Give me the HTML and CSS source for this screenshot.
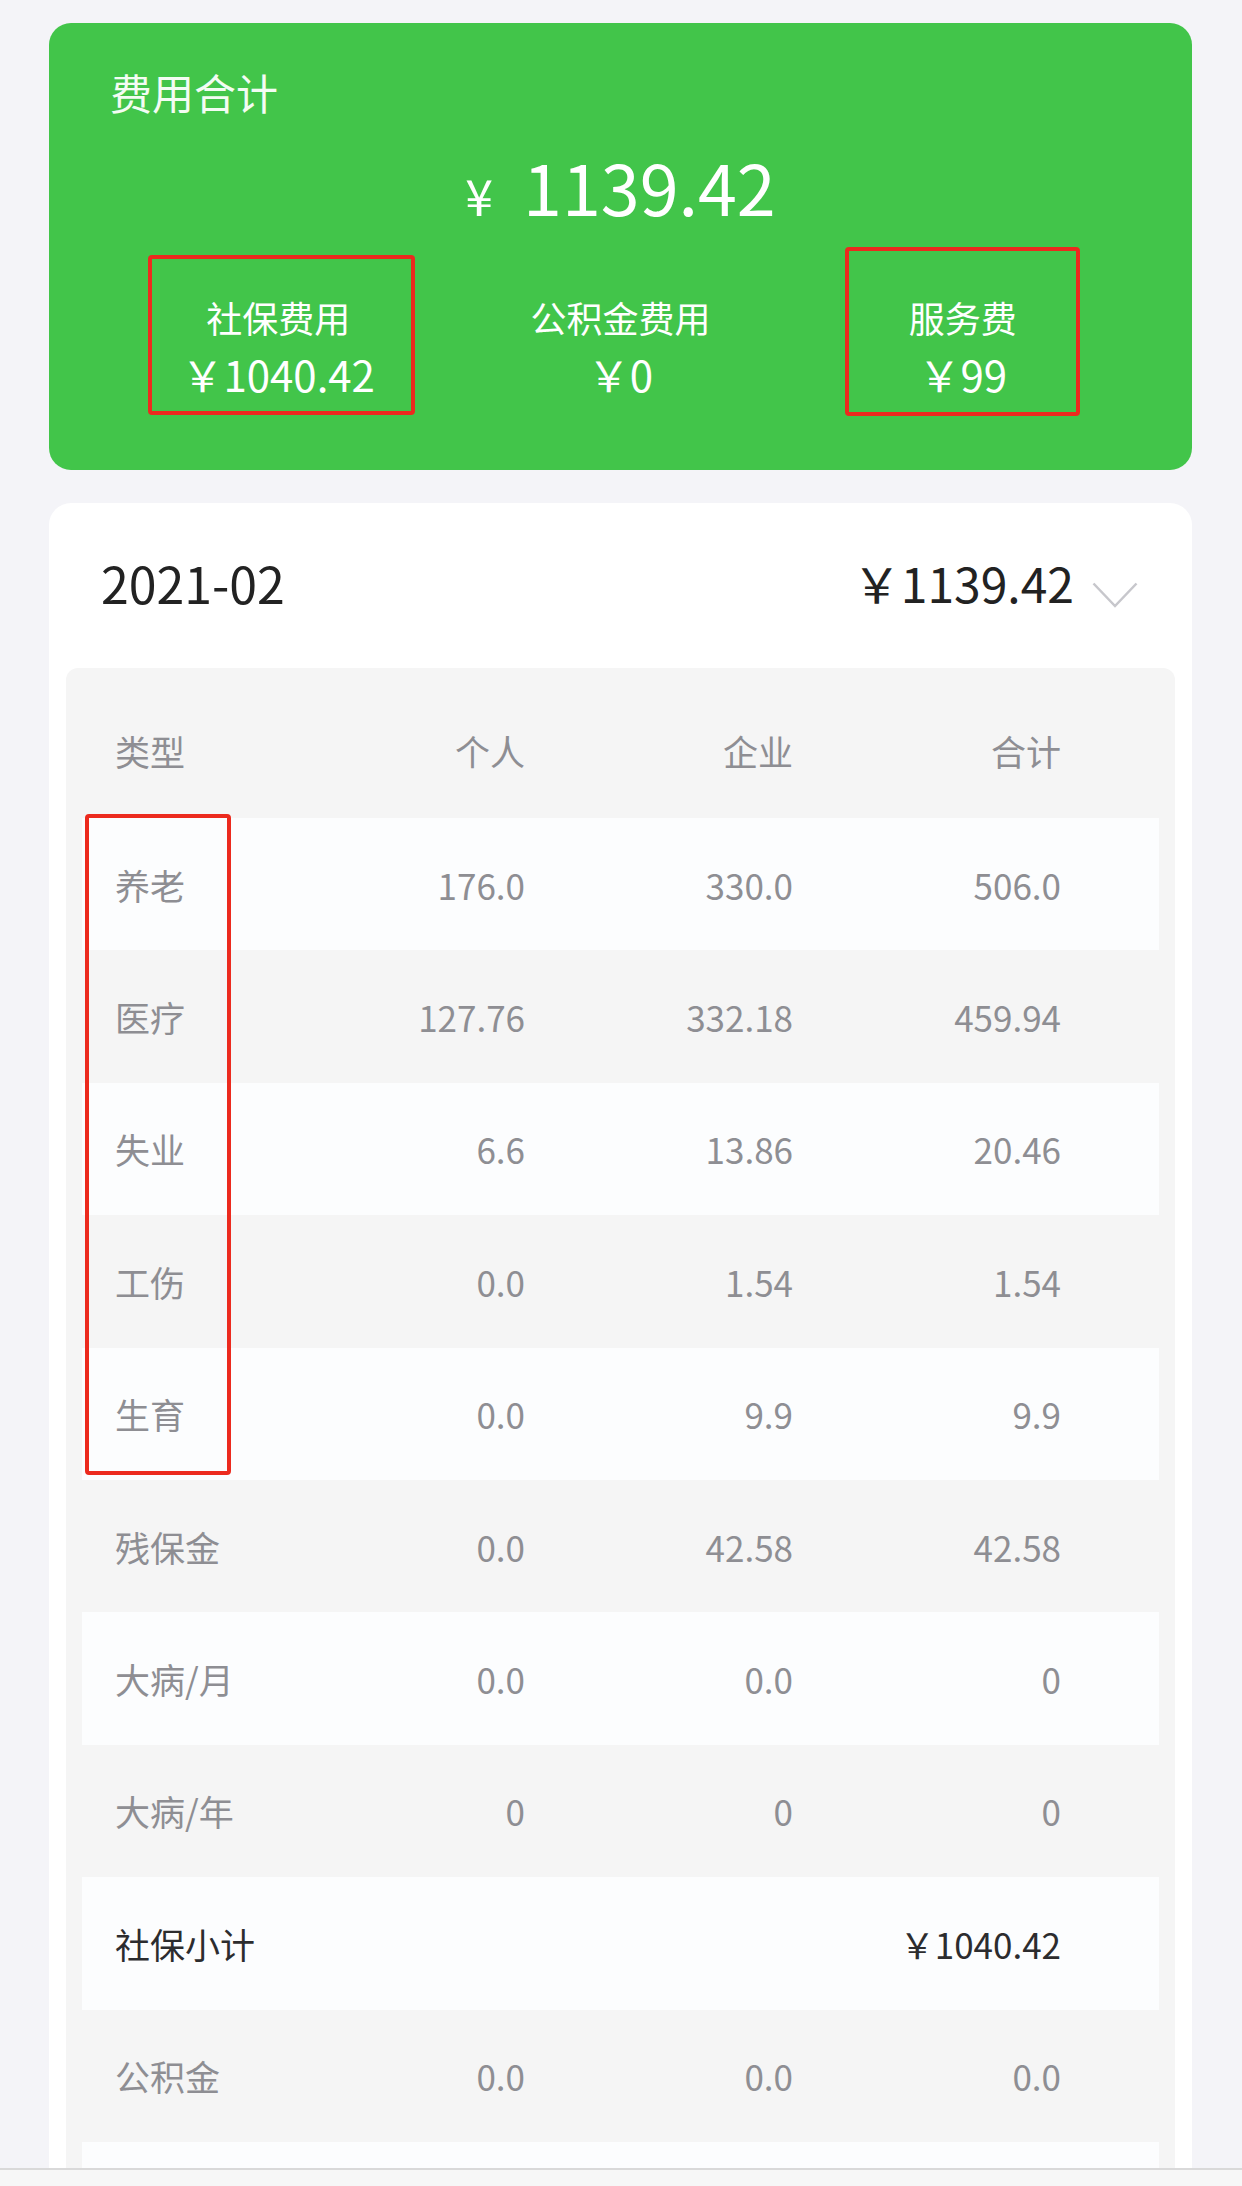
FILE: index.html
```html
<!DOCTYPE html>
<html lang="zh-CN">
<head>
    <meta charset="UTF-8">
    <meta name="viewport" content="width=device-width, initial-scale=1.0">
    <title>费用明细</title>
    <link rel="stylesheet" href="styles.css">
</head>
<body>
    <div class="page">
        <div class="summary">
            <div class="summary-title">费用合计</div>
            <div class="summary-total"><span class="yen">¥</span>1139.42</div>
            <div class="summary-cols">
                <div class="summary-col">
                    <div class="col-label">社保费用</div>
                    <div class="col-value">￥1040.42</div>
                </div>
                <div class="summary-col">
                    <div class="col-label">公积金费用</div>
                    <div class="col-value">￥0</div>
                </div>
                <div class="summary-col">
                    <div class="col-label">服务费</div>
                    <div class="col-value">￥99</div>
                </div>
            </div>
        </div>

        <div class="detail">
            <div class="detail-head">
                <div class="month">2021-02</div>
                <div class="month-total">￥1139.42</div>
                <svg class="chevron" width="46" height="26" viewBox="0 0 46 26">
                    <polyline points="1.5,1.5 23,24 44.5,1.5" fill="none" stroke="#c7c7cc" stroke-width="2.5"/>
                </svg>
            </div>

            <div class="table">
                <div class="table-head">
                    <span>类型</span>
                    <span>个人</span>
                    <span>企业</span>
                    <span>合计</span>
                </div>
                <div class="rows">
                    <div class="row"><span>养老</span><span>176.0</span><span>330.0</span><span>506.0</span></div>
                    <div class="row"><span>医疗</span><span>127.76</span><span>332.18</span><span>459.94</span></div>
                    <div class="row"><span>失业</span><span>6.6</span><span>13.86</span><span>20.46</span></div>
                    <div class="row"><span>工伤</span><span>0.0</span><span>1.54</span><span>1.54</span></div>
                    <div class="row"><span>生育</span><span>0.0</span><span>9.9</span><span>9.9</span></div>
                    <div class="row"><span>残保金</span><span>0.0</span><span>42.58</span><span>42.58</span></div>
                    <div class="row"><span>大病/月</span><span>0.0</span><span>0.0</span><span>0</span></div>
                    <div class="row"><span>大病/年</span><span>0</span><span>0</span><span>0</span></div>
                    <div class="row row-sum"><span>社保小计</span><span></span><span></span><span>￥1040.42</span></div>
                    <div class="row"><span>公积金</span><span>0.0</span><span>0.0</span><span>0.0</span></div>
                    <div class="row row-blank"></div>
                </div>
            </div>
        </div>

        <div class="mark mark-social"></div>
        <div class="mark mark-service"></div>
        <div class="mark mark-types"></div>
    </div>

    <div class="bottom-bar"></div>
</body>
</html>
```

FILE: styles.css
```css
html, body {
    margin: 0;
    padding: 0;
}

body {
    font-family: "Noto Sans CJK SC", sans-serif;
    background-color: #f4f4f8;
    color: #333;
    height: 2186px;
    overflow: hidden;
}

.page {
    position: relative;
    padding: 23px 50px 0 49px;
}

/* green summary card */
.summary {
    background-color: #42c54a;
    border-radius: 22px;
    padding: 44px 0 69px;
    color: #fff;
}

.summary-title {
    font-size: 42px;
    line-height: 50px;
    padding-left: 61px;
    color: #f3fcf3;
}

.summary-total {
    margin-top: 19px;
    font-size: 70px;
    line-height: 100px;
    text-align: center;
}

.summary-total .yen {
    font-size: 50px;
    margin-right: 30px;
}

.summary-cols {
    display: grid;
    grid-template-columns: repeat(3, 1fr);
    padding: 0 58px;
    margin-top: 48px;
    text-align: center;
}

.col-label {
    font-size: 36px;
    line-height: 50px;
}

.col-value {
    font-size: 42px;
    line-height: 54px;
    margin-top: 5px;
}

/* monthly detail card */
.detail {
    margin-top: 33px;
    background-color: #ffffff;
    border-radius: 22px 22px 0 0;
    padding: 0 17px;
    height: 1800px;
}

.detail-head {
    display: flex;
    align-items: center;
    height: 157px;
    padding: 0 37px 8px 35px;
    color: #222;
}

.month {
    flex: 1;
    font-size: 50px;
}

.month-total {
    font-size: 48px;
}

.chevron {
    margin-left: 18px;
    margin-top: 26px;
}

.table {
    background-color: #f5f5f5;
    border-radius: 12px 12px 0 0;
    padding: 0 16px;
}

.table-head,
.row {
    display: grid;
    grid-template-columns: 1fr 268px 268px 268px;
    align-items: center;
    padding: 0 98px 0 33px;
    font-size: 35px;
    color: #8e8e93;
}

.table-head {
    height: 136px;
    padding-top: 14px;
}

.table-head span:not(:first-child),
.row span:not(:first-child) {
    text-align: right;
}

.row {
    height: 132.4px;
}

.row:nth-child(odd) {
    background-color: #fcfdfe;
}

.row-sum {
    color: #2c2c2e;
}

.row-sum span:last-child {
    white-space: nowrap;
}

/* red annotation frames drawn over the screenshot */
.mark {
    position: absolute;
    box-sizing: border-box;
    border: 4px solid #ec2a1e;
    border-radius: 4px;
}

.mark-social {
    left: 148px;
    top: 255px;
    width: 267px;
    height: 160px;
}

.mark-service {
    left: 845px;
    top: 247px;
    width: 235px;
    height: 169px;
}

.mark-types {
    left: 85px;
    top: 814px;
    width: 146px;
    height: 661px;
}

.bottom-bar {
    position: fixed;
    left: 0;
    right: 0;
    bottom: 0;
    height: 16px;
    border-top: 2px solid #d9d9d9;
    background-color: #f7f7f7;
}
```
